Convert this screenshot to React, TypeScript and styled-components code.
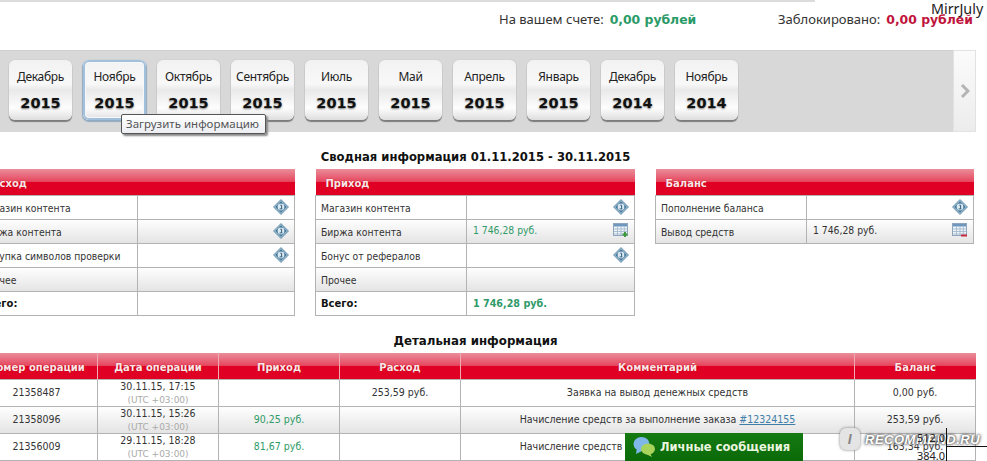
import React from "react";
import styled, { createGlobalStyle } from "styled-components";

const Global = createGlobalStyle`
  html, body { margin: 0; padding: 0; background: #fff; overflow: hidden; }
`;

const Viewport = styled.div`
  position: relative;
  width: 987px;
  height: 461px;
  overflow: hidden;
  background: #fff;
  font-family: "DejaVu Sans", Verdana, sans-serif;
  color: #222;
`;
const Content = styled.div`
  display: flex;
  flex-direction: column;
  width: 1001px;
  margin-left: -25px;
`;
const TopLine = styled.div`
  width: 840px;
  height: 2px;
  background: #dcdcdc;
`;
const AccountRow = styled.div`
  display: flex;
  height: 48px;
  padding-left: 524px;
  align-items: flex-start;
  padding-top: 8px;
  box-sizing: border-box;
  line-height: 18px;
`;
const AccountItem = styled.div<{ $w: number }>`
  width: ${(p) => p.$w}px;
  white-space: nowrap;
`;
const AccountLabel = styled.span`
  font-family: "Noto Sans", sans-serif;
  font-size: 13px;
  color: #333;
`;
const Amount = styled.b<{ $c: string }>`
  color: ${(p) => p.$c};
  font-size: 12.4px;
  margin-left: 6px;
`;
const MonthStrip = styled.div`
  display: flex;
  height: 82px;
`;
const MonthBar = styled.div`
  width: 978px;
  background: #d8d8d8;
  display: flex;
  gap: 11px;
  padding: 9px 0 0 34px;
  box-sizing: border-box;
  border-top: 1px solid #cfcfcf;
`;
const NextPanel = styled.div`
  width: 23px;
  background: linear-gradient(#fbfbfb, #ececec);
  border: 1px solid #e2e2e2;
  box-sizing: border-box;
  display: flex;
  align-items: center;
  justify-content: center;
`;
const MonthButton = styled.div<{ $active?: boolean }>`
  width: 63px;
  height: 60px;
  flex: none;
  box-sizing: border-box;
  border-radius: 6px;
  background: linear-gradient(#f2f2f2 0%, #f8f8f8 40%, #e9e9e9 50%, #fdfdfd 80%, #dedede 100%);
  box-shadow: ${(p) =>
    p.$active
      ? "inset 0 0 0 2px #a3c0da, inset 0 0 0 3px #f4f8fb, 0 1px 1px 1px #93abc2"
      : "0 2px 1px #7d7d7d, 0 0 1px #aaa"};
  display: flex;
  flex-direction: column;
  align-items: center;
  text-align: center;
`;
const MonthName = styled.div`
  margin-top: 9px;
  font-family: "Noto Sans", sans-serif;
  font-size: 12px;
  line-height: 16px;
  letter-spacing: -0.3px;
  color: #222;
  white-space: nowrap;
`;
const YearName = styled.div`
  margin-top: 9px;
  font-weight: 700;
  font-size: 14.5px;
  line-height: 18px;
  color: #111;
  text-shadow: 0 1px 2px #777;
`;
const Tooltip = styled.div`
  position: absolute;
  left: 121px;
  top: 114px;
  width: 145px;
  height: 20px;
  box-sizing: border-box;
  background: linear-gradient(#fff, #eceef2);
  border: 1px solid #555;
  border-radius: 2px;
  box-shadow: 2px 2px 2px #888;
  font-family: "Noto Sans", sans-serif;
  font-size: 11.5px;
  line-height: 18px;
  color: #555;
  padding-left: 4px;
  white-space: nowrap;
`;
const SectionTitle = styled.div<{ $w: number }>`
  height: 37px;
  padding-top: 12px;
  display: flex;
  align-items: center;
  justify-content: center;
  font-weight: 700;
  font-size: ${(p) => p.$w}px;
  color: #111;
  box-sizing: border-box;
`;
const SummaryGrid = styled.div`
  display: grid;
  grid-template-columns: 320px 320px 319px;
  gap: 20px;
  align-items: start;
  height: 147px;
`;
const Table = styled.table`
  border-collapse: collapse;
  table-layout: fixed;
  font-size: 10px;
  width: 100%;
`;
const headerBg = "linear-gradient(#ea8e9a 0%, #e6475f 48%, #e00024 50%, #e00024 100%)";
const HeadCell = styled.th<{ $w?: number; $center?: boolean }>`
  height: 26px;
  padding: 3px 0 0 ${(p) => (p.$center ? 0 : 10)}px;
  box-sizing: border-box;
  width: ${(p) => (p.$w ? `${p.$w}px` : "auto")};
  background: ${headerBg};
  color: #fbe6e9;
  font-size: 10px;
  font-weight: 700;
  text-align: ${(p) => (p.$center ? "center" : "left")};
  border-left: ${(p) => (p.$center ? "1px solid #f0a8b2" : "none")};
  text-shadow: 0 0 1px #a00;
  white-space: nowrap;
`;
const Row = styled.tr<{ $alt?: boolean }>`
  background: ${(p) => (p.$alt ? "linear-gradient(#fff, #e4e4e4)" : "#fff")};
`;
const Cell = styled.td<{ $strong?: boolean; $c?: string }>`
  height: 24px;
  padding: 1px 5px 0;
  box-sizing: border-box;
  border: 1px solid #b3b3b3;
  font-weight: ${(p) => (p.$strong ? 700 : 400)};
  font-size: ${(p) => (p.$strong ? 10 : 10.3)}px;
  font-stretch: ${(p) => (p.$strong ? "normal" : "condensed")};
  color: ${(p) => p.$c || "#333"};
  white-space: nowrap;
`;
const ValueWrap = styled.div`
  display: flex;
  align-items: center;
  justify-content: space-between;
`;
const ValueText = styled.span<{ $up?: boolean; $bold?: boolean }>`
  margin: ${(p) => (p.$up ? "-3px" : 0)} 0 0 1px;
  font-size: ${(p) => (p.$bold ? "9.6px" : "inherit")};
`;
const IconSlot = styled.span`
  display: inline-flex;
  margin: -2px 0 0 auto;
`;
const DetailCell = styled.td<{ $c?: string }>`
  height: 27px;
  padding: 0;
  box-sizing: border-box;
  border: 1px solid #b3b3b3;
  text-align: center;
  font-size: 10.5px;
  font-stretch: condensed;
  color: ${(p) => p.$c || "#333"};
  white-space: nowrap;
  line-height: 13px;
  vertical-align: middle;
`;
const Utc = styled.div`
  color: #aaa;
  font-size: 9px;
  font-stretch: normal;
  line-height: 13px;
  margin: 1px 0 -1px;
`;
const OrderLink = styled.a`
  color: #3f7ea8;
  text-decoration: underline;
`;
const Messages = styled.div`
  position: absolute;
  left: 625px;
  top: 433px;
  width: 178px;
  height: 28px;
  background: linear-gradient(#157a12, #0a6a08);
  display: flex;
  align-items: center;
  gap: 4px;
  padding-left: 7px;
  box-sizing: border-box;
  color: #e9f5df;
  font-weight: 700;
  font-size: 11.5px;
`;
const Watermark = styled.div`
  position: absolute;
  left: 840px;
  top: 428px;
  display: flex;
  align-items: center;
  gap: 5px;
  font-family: "Liberation Sans", sans-serif;
  font-style: italic;
  font-weight: 700;
  font-size: 13px;
  letter-spacing: 0.5px;
  color: #fff;
  text-shadow: 0 0 2px #555, 0 0 3px #666, 0 0 4px #888;
`;
const WatermarkBadge = styled.span`
  width: 20px;
  height: 22px;
  background: #e4e4e4;
  border-radius: 6px;
  box-shadow: 0 0 3px #777;
  display: flex;
  align-items: center;
  justify-content: center;
  color: #888;
  font-size: 14px;
  text-shadow: none;
`;
const UserTag = styled.div`
  position: absolute;
  left: 931px;
  top: 0px;
  font-family: "Noto Sans", sans-serif;
  font-size: 14.3px;
  line-height: 18px;
  color: #222;
`;
const Coord = styled.div<{ $top: number }>`
  position: absolute;
  right: 42px;
  top: ${(p) => p.$top}px;
  font-family: "Noto Sans", sans-serif;
  font-size: 11px;
  line-height: 12px;
  color: #222;
`;
const VLine = styled.div`
  position: absolute;
  left: 946px;
  top: 428px;
  width: 1px;
  height: 33px;
  background: #111;
`;
const HLine = styled.div`
  position: absolute;
  left: 946px;
  top: 446px;
  width: 41px;
  height: 1px;
  background: #111;
`;

const InfoIcon = () => (
  <svg width="16" height="16" viewBox="0 0 16 16">
    <path d="M8 .5 15.5 8 8 15.5.5 8z" fill="#8fb2c9" stroke="#5f8aa6" strokeWidth=".8" />
    <path d="M8 2.6 13.4 8 8 13.4 2.6 8z" fill="#3f7396" />
    <circle cx="8" cy="8" r="3.4" fill="#dbe8f0" />
    <path d="M7.3 6.2h1.3v3.6M6.6 9.9h2.8" stroke="#2f5f80" strokeWidth="1" fill="none" />
  </svg>
);
const SheetIcon = ({ color }: { color: string }) => (
  <svg width="16" height="15" viewBox="0 0 16 15">
    <rect x=".5" y=".5" width="14" height="12" fill="#eef3f8" stroke="#8ea6bd" />
    <rect x="1" y="1" width="13" height="2.5" fill="#6f97bd" />
    <path d="M1 6h13M1 8.5h13M1 11h13M4.5 4v8M8 4v8M11.3 4v8" stroke="#9db4c8" strokeWidth=".8" />
    {color === "green" ? (
      <path d="M12 9v5M9.5 11.5h5" stroke="#3c9a3c" strokeWidth="2" />
    ) : (
      <path d="M9 12.5h6" stroke="#c8283c" strokeWidth="2" />
    )}
  </svg>
);
const ChevronIcon = () => (
  <svg width="10" height="16" viewBox="0 0 10 16">
    <path d="M2 2 8 8 2 14" fill="none" stroke="#b4b4b4" strokeWidth="3" />
  </svg>
);
const ChatIcon = () => (
  <svg width="24" height="24" viewBox="0 0 24 24">
    <ellipse cx="9.5" cy="9" rx="8" ry="7" fill="#7fb7e8" />
    <path d="M5 13 4 19l6-3z" fill="#7fb7e8" />
    <ellipse cx="16" cy="14" rx="7" ry="5.5" fill="#a9d45c" />
    <path d="M18 18l2 4-6-3z" fill="#a9d45c" />
  </svg>
);

type SummaryRow = { label: string; value?: string; icon?: "info" | "green" | "red"; strong?: boolean; c?: string };

const Summary = ({ title, first, rows }: { title: string; first: number; rows: SummaryRow[] }) => (
  <Table>
    <thead>
      <tr>
        <HeadCell $w={first}>{title}</HeadCell>
        <HeadCell />
      </tr>
    </thead>
    <tbody>
      {rows.map((r, i) => (
        <Row key={r.label} $alt={i % 2 === 1}>
          <Cell $strong={r.strong} $c={r.strong ? "#111" : undefined}>
            {r.label}
          </Cell>
          <Cell $strong={r.strong} $c={r.c}>
            <ValueWrap>
              <ValueText $up={!!r.icon} $bold={r.strong}>{r.value}</ValueText>
              {r.icon === "info" && (
                <IconSlot>
                  <InfoIcon />
                </IconSlot>
              )}
              {r.icon === "green" && (
                <IconSlot>
                  <SheetIcon color="green" />
                </IconSlot>
              )}
              {r.icon === "red" && (
                <IconSlot>
                  <SheetIcon color="red" />
                </IconSlot>
              )}
            </ValueWrap>
          </Cell>
        </Row>
      ))}
    </tbody>
  </Table>
);

const months = [
  ["Декабрь", "2015"],
  ["Ноябрь", "2015"],
  ["Октябрь", "2015"],
  ["Сентябрь", "2015"],
  ["Июль", "2015"],
  ["Май", "2015"],
  ["Апрель", "2015"],
  ["Январь", "2015"],
  ["Декабрь", "2014"],
  ["Ноябрь", "2014"],
];
const green = "#2f9a68";

export default function App() {
  return (
    <Viewport>
      <Global />
      <Content>
        <TopLine />
        <AccountRow>
          <AccountItem $w={282}>
            <AccountLabel>На вашем счете:</AccountLabel>
            <Amount $c="#2a9a66">0,00 рублей</Amount>
          </AccountItem>
          <AccountItem $w={200}>
            <AccountLabel>Заблокировано:</AccountLabel>
            <Amount $c="#c0143c">0,00 рублей</Amount>
          </AccountItem>
        </AccountRow>
        <MonthStrip>
          <MonthBar>
            {months.map(([m, y], i) => (
              <MonthButton key={i} $active={i === 1}>
                <MonthName>{m}</MonthName>
                <YearName>{y}</YearName>
              </MonthButton>
            ))}
          </MonthBar>
          <NextPanel>
            <ChevronIcon />
          </NextPanel>
        </MonthStrip>
        <SectionTitle $w={11.6}>Сводная информация 01.11.2015 - 30.11.2015</SectionTitle>
        <SummaryGrid>
          <Summary
            title="Расход"
            first={162}
            rows={[
              { label: "Магазин контента", icon: "info" },
              { label: "Биржа контента", icon: "info" },
              { label: "Покупка символов проверки", icon: "info" },
              { label: "Прочее" },
              { label: "Всего:", strong: true },
            ]}
          />
          <Summary
            title="Приход"
            first={151}
            rows={[
              { label: "Магазин контента", icon: "info" },
              { label: "Биржа контента", value: "1 746,28 руб.", icon: "green", c: green },
              { label: "Бонус от рефералов", icon: "info" },
              { label: "Прочее" },
              { label: "Всего:", value: "1 746,28 руб.", strong: true, c: green },
            ]}
          />
          <Summary
            title="Баланс"
            first={151}
            rows={[
              { label: "Пополнение баланса", icon: "info" },
              { label: "Вывод средств", value: "1 746,28 руб.", icon: "red" },
            ]}
          />
        </SummaryGrid>
        <SectionTitle $w={11.8}>Детальная информация</SectionTitle>
        <Table>
          <thead>
            <tr>
              <HeadCell $w={122} $center>Номер операции</HeadCell>
              <HeadCell $w={121} $center>Дата операции</HeadCell>
              <HeadCell $w={121} $center>Приход</HeadCell>
              <HeadCell $w={121} $center>Расход</HeadCell>
              <HeadCell $w={394} $center>Комментарий</HeadCell>
              <HeadCell $w={121} $center>Баланс</HeadCell>
            </tr>
          </thead>
          <tbody>
            <Row>
              <DetailCell>21358487</DetailCell>
              <DetailCell>30.11.15, 17:15<Utc>(UTC +03:00)</Utc></DetailCell>
              <DetailCell />
              <DetailCell>253,59 руб.</DetailCell>
              <DetailCell>Заявка на вывод денежных средств</DetailCell>
              <DetailCell>0,00 руб.</DetailCell>
            </Row>
            <Row $alt>
              <DetailCell>21358096</DetailCell>
              <DetailCell>30.11.15, 15:26<Utc>(UTC +03:00)</Utc></DetailCell>
              <DetailCell $c={green}>90,25 руб.</DetailCell>
              <DetailCell />
              <DetailCell>
                Начисление средств за выполнение заказа <OrderLink>#12324155</OrderLink>
              </DetailCell>
              <DetailCell>253,59 руб.</DetailCell>
            </Row>
            <Row>
              <DetailCell>21356009</DetailCell>
              <DetailCell>29.11.15, 18:28<Utc>(UTC +03:00)</Utc></DetailCell>
              <DetailCell $c={green}>81,67 руб.</DetailCell>
              <DetailCell />
              <DetailCell>
                Начисление средств за выполнение заказа <OrderLink>#12324155</OrderLink>
              </DetailCell>
              <DetailCell>163,34 руб.</DetailCell>
            </Row>
          </tbody>
        </Table>
      </Content>
      <Tooltip>Загрузить информацию</Tooltip>
      <UserTag>MirrJuly</UserTag>
      <Messages>
        <ChatIcon />
        Личные сообщения
      </Messages>
      <Watermark>
        <WatermarkBadge>I</WatermarkBadge>
        RECOMMEND.RU
      </Watermark>
      <Coord $top={432}>512.0</Coord>
      <Coord $top={450}>384.0</Coord>
      <VLine />
      <HLine />
    </Viewport>
  );
}
